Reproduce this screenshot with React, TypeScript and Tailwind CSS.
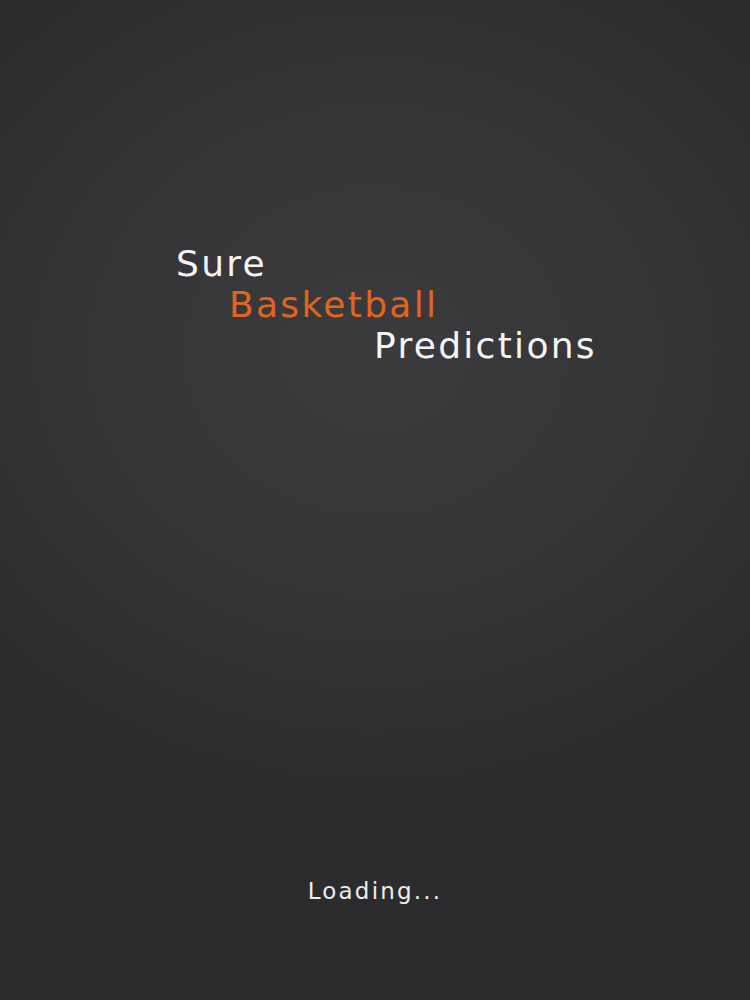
export default function App() {
  return (
    <div
      className="relative flex h-[1000px] w-full flex-col overflow-hidden bg-[radial-gradient(ellipse_70%_45%_at_50%_35%,#3b3b3d_0%,#353537_55%,#2c2c2e_100%)]"
      style={{ fontFamily: '"DejaVu Sans", "Open Sans", sans-serif' }}
    >
      <div className="flex flex-col pt-[243px] text-[36px] leading-[41px] tracking-[2.3px]">
        <div className="pl-[176px] text-[#f4f4f4]">Sure</div>
        <div className="pl-[229px] text-[#e0651e]">Basketball</div>
        <div className="pl-[374px] text-[#f4f4f4]">Predictions</div>
      </div>
      <div className="flex-1" />
      <div className="pb-[94px] text-center text-[23px] leading-[30px] tracking-[2.2px] text-[#ededed]">
        Loading...
      </div>
    </div>
  );
}
